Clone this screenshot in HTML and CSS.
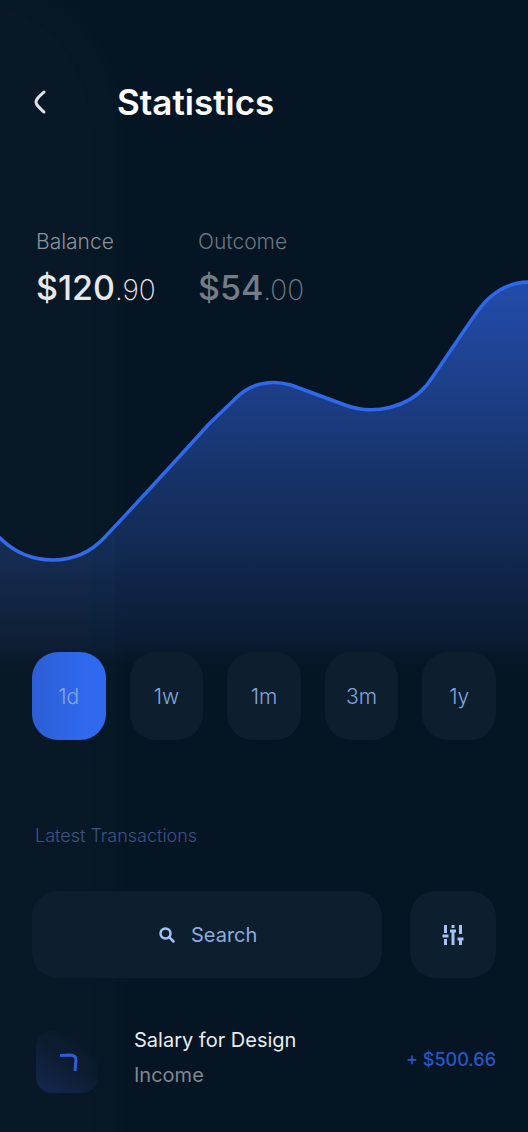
FILE: index.html
```html
<!DOCTYPE html>
<html lang="en">
<head>
<meta charset="utf-8">
<meta name="viewport" content="width=device-width, initial-scale=1">
<title>Statistics</title>
<link rel="stylesheet" href="styles.css">
</head>
<body>
<main class="screen">
  <header class="topbar">
    <button class="back" type="button" aria-label="Back">
      <svg width="14" height="26" viewBox="0 0 14 26" aria-hidden="true"><path d="M11 3 C8 6 5 8 3.500 11 Q2.500 13 3.500 15 C5 18 8 20 11 23" /></svg>
    </button>
    <h1 class="title">Statistics</h1>
  </header>

  <section class="overview">
    <svg class="chart" viewBox="0 0 528 400" preserveAspectRatio="none" role="img" aria-label="Balance over time">
      <defs>
        <linearGradient id="area" x1="0" y1="0" x2="0" y2="1">
          <stop offset="0" stop-color="#234cab"/>
          <stop offset="0.250" stop-color="#1d408b"/>
          <stop offset="0.500" stop-color="#163268"/>
          <stop offset="0.700" stop-color="#11284f"/>
          <stop offset="0.850" stop-color="#0c1f3b"/>
          <stop offset="0.930" stop-color="#091a30"/>
          <stop offset="1" stop-color="#051524" stop-opacity="0"/>
        </linearGradient>
      </defs>
      <path fill="url(#area)" d="M0 262 C15 277 33 284 53 284 C74 284 91 276 105 261 C149 214 180 180 209 148 L235 123 C249 108 269 103 291 109 L345 129 C374 140 408 131 426 110 C430 106 455 67 475 39 C488 19 505 6 528 6 V400 H0 Z"/>
      <path class="chart-line" stroke-width="3.500" d="M-2 260 C14 277 33 284 53 284 C74 284 91 276 105 261 C149 214 180 180 209 148 L235 123 C249 108 269 103 291 109 L345 129 C374 140 408 131 426 110 C430 106 455 67 475 39 C488 19 505 6 530 6"/>
    </svg>
    <dl class="totals">
      <div class="total">
        <dt>Balance</dt>
        <dd>$120<span>.90</span></dd>
      </div>
      <div class="total total-muted">
        <dt>Outcome</dt>
        <dd>$54<span>.00</span></dd>
      </div>
    </dl>
  </section>

  <div class="ranges" role="group" aria-label="Time range">
    <button class="range range-active" type="button" aria-pressed="true">1d</button>
    <button class="range" type="button" aria-pressed="false">1w</button>
    <button class="range" type="button" aria-pressed="false">1m</button>
    <button class="range" type="button" aria-pressed="false">3m</button>
    <button class="range" type="button" aria-pressed="false">1y</button>
  </div>

  <section class="transactions">
    <h2 class="subtitle">Latest Transactions</h2>
    <div class="tools">
      <label class="search">
        <svg width="16" height="16" viewBox="0 0 16 16" aria-hidden="true"><circle cx="6.500" cy="6.500" r="5"/><path d="M10.200 10.200 L14.500 14.500"/></svg>
        <input type="text" placeholder="Search" aria-label="Search">
      </label>
      <button class="filter" type="button" aria-label="Filter">
        <svg width="22" height="20" viewBox="0 0 22 20" aria-hidden="true"><path d="M3.500 0 V8 M0.500 11 H6.500 M3.500 14 V20 M11 0 V3 M8 6 H14 M11 6 V20 M18.500 0 V9 M15.500 14 H21.500 M18.500 14 V20"/></svg>
      </button>
    </div>
    <ul class="list">
      <li class="item">
        <span class="badge">
          <svg width="18" height="18" viewBox="0 0 18 18" aria-hidden="true"><path d="M0 2.500 L10 2 Q16 2 16 7 L15 18"/></svg>
        </span>
        <div class="details">
          <p class="name">Salary for Design</p>
          <p class="kind">Income</p>
        </div>
        <strong class="amount">+ $500.66</strong>
      </li>
    </ul>
  </section>
</main>
</body>
</html>
```
FILE: styles.css
```css
* {
  box-sizing: border-box;
  margin: 0;
  padding: 0;
}

body {
  background: #051524;
  color: #fff;
  font-family: Inter, "Open Sans", sans-serif;
}

button {
  border: 0;
  background: none;
  color: inherit;
  font: inherit;
  cursor: pointer;
}

svg {
  display: block;
  fill: none;
  stroke-linecap: round;
  stroke-linejoin: round;
}

.screen {
  position: relative;
  min-height: 100vh;
  padding-bottom: 36px;
  overflow: hidden;
}

/* faint glow down the left edge */
.screen::before {
  content: "";
  position: absolute;
  inset: 0 auto -200px -160px;
  width: 250px;
  border-radius: 160px;
  background: rgba(255, 225, 225, 0.020);
  box-shadow: 0 0 0 25px rgba(160, 220, 200, 0.012), 0 0 0 32px rgba(160, 220, 200, 0.008);
  pointer-events: none;
}

.topbar {
  display: flex;
  align-items: center;
  gap: 69px;
  padding: 80px 32px 0;
}

.back svg {
  stroke: #dfe3e6;
  stroke-width: 3;
}

.back {
  padding: 9px 1px;
}

.title {
  font-size: 35px;
  line-height: 44px;
  font-weight: 600;
}

.overview {
  display: grid;
  padding-top: 106px;
}

.chart {
  grid-area: 1 / 1;
  width: 100%;
  height: 400px;
  margin-top: 46px;
}

.chart-line {
  stroke: #3068eb;
  vector-effect: non-scaling-stroke;
}

.totals {
  grid-area: 1 / 1;
  position: relative;
  display: flex;
  gap: 46px;
  padding: 0 36px;
}

.total dt {
  color: #8a929b;
  font-size: 21px;
  line-height: 24px;
  font-weight: 300;
}

.total dd {
  margin-top: 10px;
  color: #e6e8ea;
  font-size: 34px;
  line-height: 48px;
  font-weight: 500;
}

.total span {
  font-size: 28px;
  font-weight: 200;
}

.total:first-child {
  width: 116px;
}

.total-muted dt {
  color: #6e7780;
}

.total-muted dd {
  color: #747c85;
}

.ranges {
  position: relative;
  display: grid;
  grid-template-columns: repeat(5, 1fr);
  gap: 24px;
  margin-top: -24px;
  padding: 0 32px;
}

.range {
  height: 88px;
  border-radius: 26px;
  background: #0d1e2e;
  color: #86a6dc;
  font-size: 21px;
  font-weight: 300;
}

.range-active {
  background: linear-gradient(90deg, #2c5ed4, #3068ee 70%);
}

.transactions {
  padding: 84px 32px 0;
}

.subtitle {
  padding-left: 3px;
  color: #3d5283;
  font-size: 18px;
  line-height: 24px;
  font-weight: 300;
}

.tools {
  position: relative;
  display: flex;
  gap: 28px;
  margin-top: 43px;
}

.search {
  flex: 1;
  display: flex;
  align-items: center;
  justify-content: center;
  gap: 16px;
  height: 87px;
  padding-left: 8px;
  border-radius: 26px;
  background: #0d1e2e;
}

.search svg {
  stroke: #a4c2f4;
  stroke-width: 2.500;
}

.search input {
  width: 72px;
  border: 0;
  outline: 0;
  background: none;
  color: #8badde;
  font: inherit;
  font-size: 20px;
  line-height: 28px;
}

.search input::placeholder {
  color: #8badde;
  opacity: 1;
}

.filter {
  display: grid;
  place-items: center;
  width: 86px;
  border-radius: 26px;
  background: #0d1e2e;
}

.filter svg {
  stroke: #a4c2f4;
  stroke-width: 3;
  stroke-linecap: butt;
}

.list {
  margin-top: 45px;
  list-style: none;
}

.item {
  display: flex;
  align-items: center;
  padding-left: 4px;
}

.badge {
  display: grid;
  place-items: center;
  width: 62px;
  height: 62px;
  margin-top: 8px;
  border-radius: 16px;
  background: linear-gradient(35deg, #102552, rgba(13, 30, 56, 0.500) 50%, rgba(5, 21, 36, 0) 85%);
}

.badge svg {
  margin-left: 4px;
  stroke: #2b5dd6;
  stroke-width: 3;
  stroke-linecap: butt;
}

.details {
  flex: 1;
  padding-left: 36px;
}

.name,
.kind {
  font-size: 20px;
  line-height: 35px;
  font-weight: 400;
}

.name {
  color: #e9ecef;
}

.kind {
  color: #7f8891;
}

.amount {
  padding-top: 4px;
  color: #2857c5;
  font-size: 18px;
  line-height: 24px;
  font-weight: 500;
}
```
